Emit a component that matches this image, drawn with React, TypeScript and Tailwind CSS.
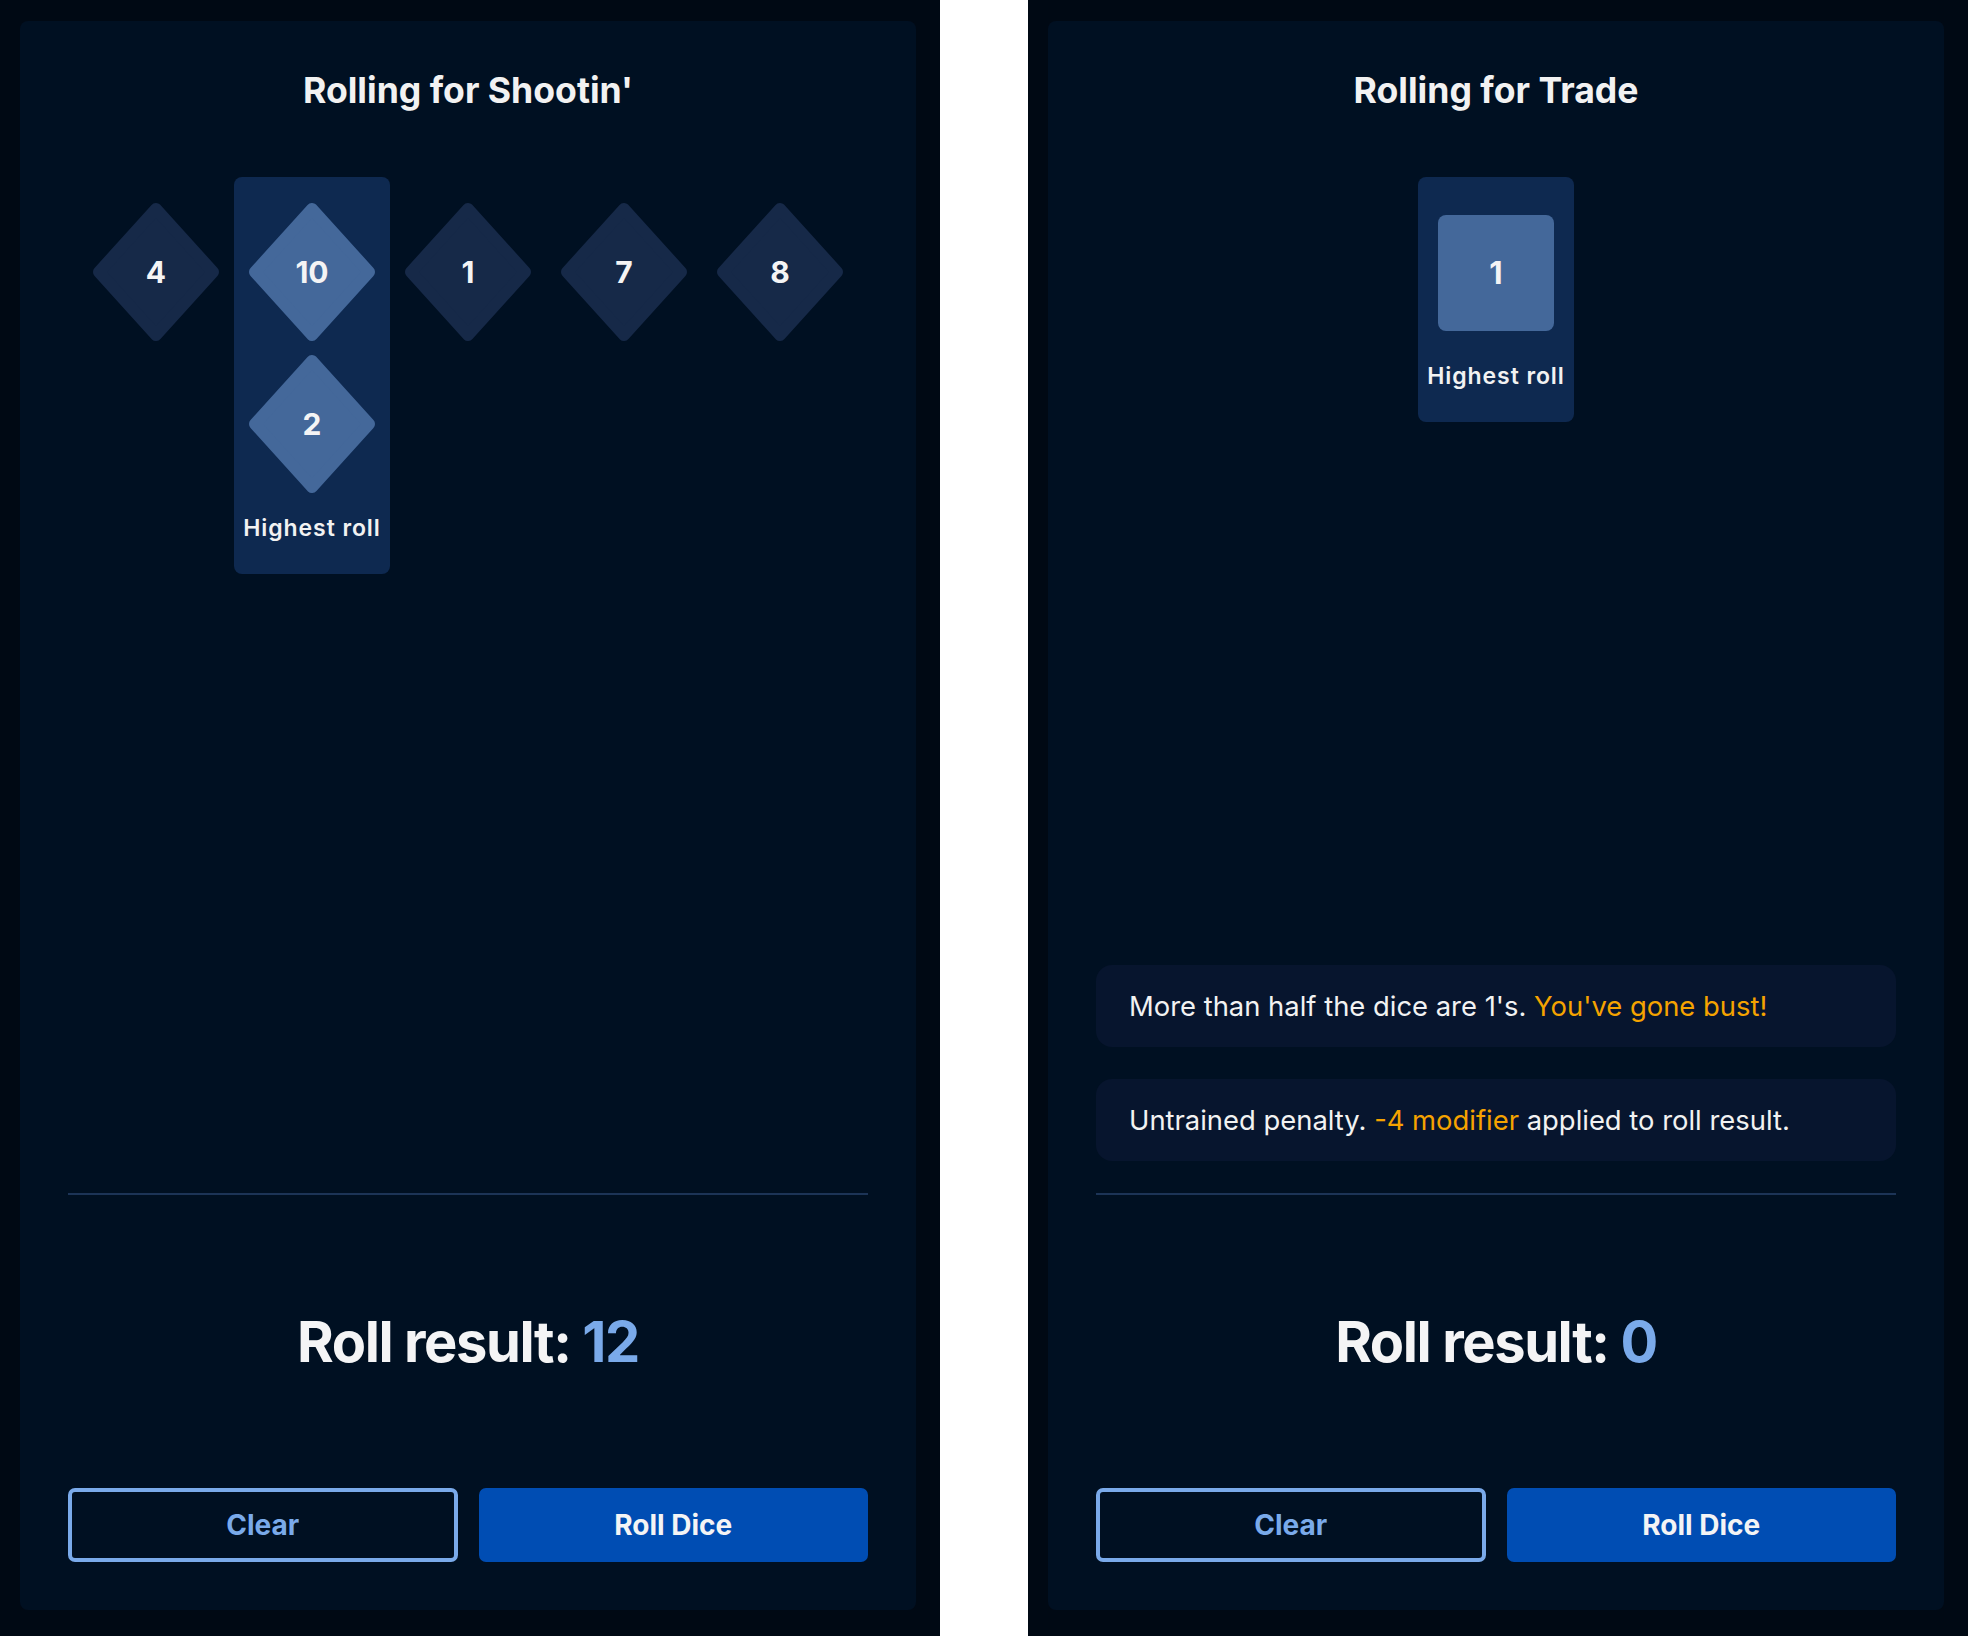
import React from "react";

const FONT = { fontFamily: "Inter, 'Noto Sans', sans-serif" };

function Diamond({ value, active }: { value: number; active: boolean }) {
  const fill = active ? "#44689a" : "#162948";
  return (
    <div className="relative w-[156px] h-[152px] flex items-center justify-center">
      <svg
        className="absolute left-[15px] top-[7px]"
        width="126"
        height="138"
        viewBox="0 0 126 138"
      >
        <polygon
          points="63,6 120,69 63,132 6,69"
          fill={fill}
          stroke={fill}
          strokeWidth="12"
          strokeLinejoin="round"
        />
      </svg>
      <span className="relative text-[30px] font-bold text-[#f4f4f5]">{value}</span>
    </div>
  );
}

function SquareDie({ value }: { value: number }) {
  return (
    <div className="w-[156px] h-[152px] flex items-center justify-center">
      <div className="w-[116px] h-[116px] mt-[2px] rounded-lg bg-[#44689a] flex items-center justify-center">
        <span className="text-[31px] font-bold text-[#f4f4f5]">{value}</span>
      </div>
    </div>
  );
}

function Column({
  children,
  active,
}: {
  children: React.ReactNode;
  active: boolean;
}) {
  return (
    <div
      className={
        active
          ? "w-[156px] flex flex-col items-center pt-[19px] pb-[32px] rounded-lg bg-[#0e2950]"
          : "w-[156px] flex flex-col items-center pt-[19px] pb-[32px] rounded-lg"
      }
    >
      {children}
      {active && (
        <div className="mt-[14px] text-[23px] leading-[28px] font-semibold tracking-[0.04em] text-[#f2f2f2] whitespace-nowrap">
          Highest roll
        </div>
      )}
    </div>
  );
}

function Panel({
  title,
  dice,
  messages,
  result,
}: {
  title: string;
  dice: React.ReactNode;
  messages?: React.ReactNode;
  result: string;
}) {
  return (
    <div className="w-[940px] h-[1636px] bg-[#000914] pl-[20px] pr-[24px] pt-[21px] pb-[26px]">
      <div className="h-full rounded-lg bg-[#001022] p-[48px] flex flex-col">
        <h1 className="mt-[2px] text-[35.6px] leading-[40px] font-bold text-center text-[#f2f2f2]">
          {title}
        </h1>
        <div className="mt-[66px] flex justify-center items-start">{dice}</div>
        <div className="flex-1" />
        {messages}
        <div className="h-[2px] bg-[#1c3457]" />
        <div className="h-[293px] flex items-center justify-center">
          <div className="text-[56px] leading-none font-bold tracking-tight text-[#f4f4f5]">
            Roll result: <span className="text-[#7aaaea]">{result}</span>
          </div>
        </div>
        <div className="grid grid-cols-2 gap-[21px]">
          <button className="h-[74px] rounded-[7px] border-[4px] border-[#7aaaea] text-[#7aaaea] text-[28px] font-bold">
            Clear
          </button>
          <button className="h-[74px] rounded-[7px] bg-[#004db3] text-[#f4f4f5] text-[28px] font-bold">
            Roll Dice
          </button>
        </div>
      </div>
    </div>
  );
}

function Message({ children }: { children: React.ReactNode }) {
  return (
    <div className="h-[82px] rounded-2xl bg-[#07152e] px-[33px] flex items-center text-[27.4px] text-[#f2f2f2]">
      <p className="mt-[2px]">{children}</p>
    </div>
  );
}

export default function App() {
  return (
    <div style={FONT} className="w-[1968px] h-[1636px] bg-white flex justify-between">
      <Panel
        title="Rolling for Shootin'"
        result="12"
        dice={
          <>
            <Column active={false}>
              <Diamond value={4} active={false} />
            </Column>
            <Column active={true}>
              <Diamond value={10} active={true} />
              <Diamond value={2} active={true} />
            </Column>
            <Column active={false}>
              <Diamond value={1} active={false} />
            </Column>
            <Column active={false}>
              <Diamond value={7} active={false} />
            </Column>
            <Column active={false}>
              <Diamond value={8} active={false} />
            </Column>
          </>
        }
      />
      <Panel
        title="Rolling for Trade"
        result="0"
        dice={
          <Column active={true}>
            <SquareDie value={1} />
          </Column>
        }
        messages={
          <div className="flex flex-col gap-[32px] mb-[32px]">
            <Message>
              More than half the dice are 1's.{" "}
              <span className="text-[#f5a300]">You've gone bust!</span>
            </Message>
            <Message>
              Untrained penalty.{" "}
              <span className="text-[#f5a300]">-4 modifier</span> applied to roll result.
            </Message>
          </div>
        }
      />
    </div>
  );
}
